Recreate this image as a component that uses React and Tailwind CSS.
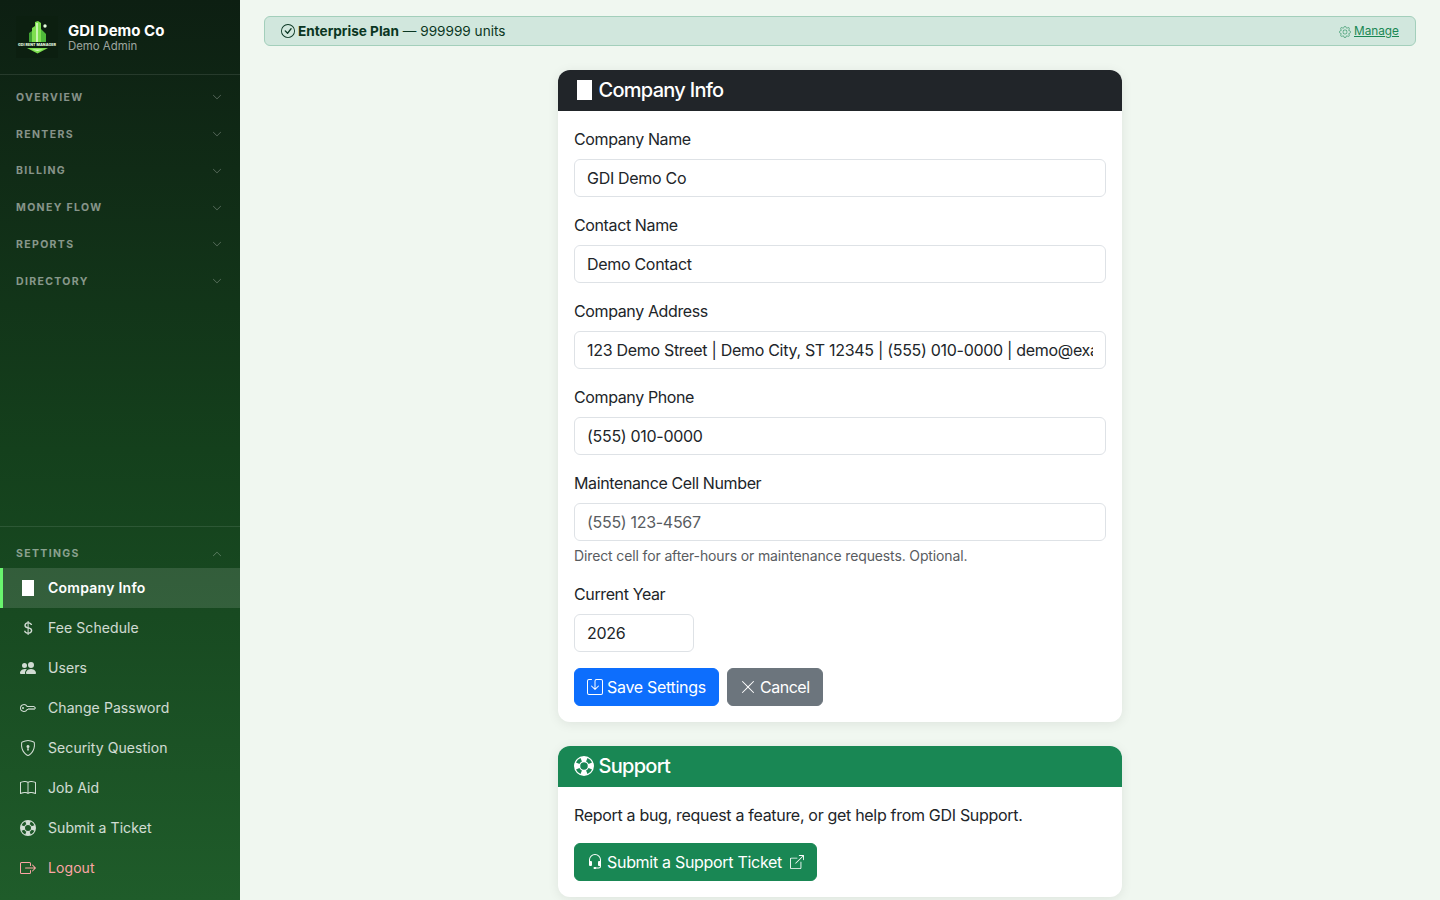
import React from "react";
import { BsCheckCircle, BsGear, BsPeopleFill, BsKey, BsShieldLock, BsBook, BsLifePreserver, BsBoxArrowRight, BsCurrencyDollar, BsChevronDown, BsChevronUp, BsSave, BsXLg, BsHeadset, BsBoxArrowUpRight } from "react-icons/bs";

const sections = ["OVERVIEW", "RENTERS", "BILLING", "MONEY FLOW", "REPORTS", "DIRECTORY"];
const items = [
  ["Fee Schedule", BsCurrencyDollar],
  ["Users", BsPeopleFill],
  ["Change Password", BsKey],
  ["Security Question", BsShieldLock],
  ["Job Aid", BsBook],
  ["Submit a Ticket", BsLifePreserver],
];

function Logo() {
  return (
    <svg width="42" height="42" viewBox="0 0 42 42" className="shrink-0">
      <rect width="42" height="42" fill="#0c1f10" />
      <path d="M13 26V17l3-2v11z" fill="#3f9f33" />
      <path d="M16 26V12l3-2V6l3-1 3 2v19z" fill="#7ddf4f" />
      <path d="M25 26V13l3 3 2 2v8z" fill="#4fb83a" />
      <rect x="20" y="7" width="2" height="19" fill="#c8f5b0" />
      <circle cx="29" cy="10" r="1.700" fill="#e8ffe0" />
      <text x="21" y="30" textAnchor="middle" fontSize="3.700" fontWeight="800" letterSpacing="0.05" fill="#e8ffe0" fontFamily="Inter, sans-serif">GDI RENT MANAGER</text>
      <path d="M11 32h21l-10.500 5.500z" fill="#7ddf4f" />
      <path d="M16 33.500h11l-5.500 1.500z" fill="#d6ffc4" />
    </svg>
  );
}

function Field({ label, value, placeholder, help, narrow }) {
  return (
    <div className="mb-4">
      <label className="block mb-2 text-base leading-6 tracking-[-0.38px] text-[#212529]">{label}</label>
      <input
        readOnly
        value={value || ""}
        placeholder={placeholder}
        className={`block h-[38px] ${narrow ? "w-[120px]" : "w-full"} rounded-md border border-[#dee2e6] bg-white px-3 text-base tracking-[-0.3px] text-[#212529] outline-none placeholder:text-[#595c5f]`}
      />
      {help && <div className="mt-1 text-sm leading-[21px] tracking-[-0.13px] text-[#595c5f]">{help}</div>}
    </div>
  );
}

export default function App() {
  return (
    <div className="flex h-screen overflow-hidden bg-[#f0f7f0] font-['Inter','Liberation_Sans',sans-serif] antialiased">
      <aside className="flex w-[240px] shrink-0 flex-col bg-gradient-to-b from-[#0d1f12] via-[#14401c] to-[#1f5c2a] text-white">
        <div className="flex h-[75px] items-center gap-[10px] border-b border-white/10 pl-4">
          <Logo />
          <div>
            <div className="text-[15px] font-bold leading-[18px] text-white">GDI Demo Co</div>
            <div className="text-[11.400px] leading-[13px] text-white/60">Demo Admin</div>
          </div>
        </div>
        <nav className="flex-1 pt-[4.300px]">
          {sections.map((s) => (
            <div key={s} className="flex h-[36.800px] items-center justify-between pl-4 pr-[18px]">
              <span className="text-[10.500px] font-bold tracking-[1.350px] text-white/50">{s}</span>
              <BsChevronDown className="mb-[1px] text-[10px] text-white/40" />
            </div>
          ))}
        </nav>
        <div className="border-t border-white/10 pb-3">
          <div className="flex h-[41px] items-center justify-between pl-4 pr-[18px] pt-[12px]">
            <span className="text-[10.500px] font-bold tracking-[1.350px] text-white/50">SETTINGS</span>
            <BsChevronUp className="text-[10px] text-white/40" />
          </div>
          <a className="flex h-10 items-center gap-[10px] border-l-[3px] border-[#69f56e] bg-white/[0.12] pl-[15px] text-sm font-semibold tracking-[0.25px] text-white">
            <span className="flex w-5 justify-center"><span className="block h-4 w-3 bg-white" /></span>
            Company Info
          </a>
          {items.map(([name, Icon]) => (
            <a key={name} className="flex h-10 items-center gap-[10px] pl-[18px] text-sm tracking-[0.08px] text-white/80">
              <span className="flex w-5 justify-center"><Icon className="text-base" /></span>
              {name}
            </a>
          ))}
          <a className="flex h-10 items-center gap-[10px] pl-[18px] text-sm tracking-[0.08px] text-[#fca5a5]">
            <span className="flex w-5 justify-center"><BsBoxArrowRight className="text-base" /></span>
            Logout
          </a>
        </div>
      </aside>

      <main className="min-w-0 flex-1 overflow-hidden px-6 pt-4">
        <div className="flex h-[30px] items-center justify-between rounded-md border border-[#a3cfbb] bg-[#d1e7dd] pl-4 pr-4 text-[13.600px] text-[#0a3622]">
          <div className="flex items-center gap-[3px]">
            <BsCheckCircle className="text-sm" />
            <span className="pt-[1px]"><strong className="font-bold">Enterprise Plan</strong> — 999999 units</span>
          </div>
          <a className="flex items-center gap-[3px] pt-[1px] text-[11.800px] text-[#198754] underline">
            <BsGear className="text-xs text-[#4fa37c]" /> Manage
          </a>
        </div>

        <div className="mx-auto mt-6 w-[564px]">
          <section className="overflow-hidden rounded-xl bg-white shadow-[0_2px_12px_rgba(0,0,0,0.08)]">
            <header className="flex h-[41px] items-center gap-[4.500px] bg-[#212529] px-4 pb-[1px] text-xl font-medium tracking-[-0.72px] text-white">
              <span className="flex w-5 justify-center"><span className="block h-5 w-[15px] bg-white" /></span>
              Company Info
            </header>
            <div className="p-4">
              <Field label="Company Name" value="GDI Demo Co" />
              <Field label="Contact Name" value="Demo Contact" />
              <Field label="Company Address" value="123 Demo Street | Demo City, ST 12345 | (555) 010-0000 | demo@example.com" />
              <Field label="Company Phone" value="(555) 010-0000" />
              <Field label="Maintenance Cell Number" placeholder="(555) 123-4567" help="Direct cell for after-hours or maintenance requests. Optional." />
              <Field label="Current Year" value="2026" narrow />
              <div className="flex gap-2">
                <button className="flex h-[38px] items-center gap-1 rounded-md border border-[#0d6efd] bg-[#0d6efd] px-3 text-base tracking-[-0.3px] text-white">
                  <BsSave className="text-base" /> Save Settings
                </button>
                <button className="flex h-[38px] items-center gap-1 rounded-md border border-[#6c757d] bg-[#6c757d] px-3 text-base tracking-[-0.45px] text-white">
                  <BsXLg className="text-base" /> Cancel
                </button>
              </div>
            </div>
          </section>

          <section className="mt-6 overflow-hidden rounded-xl bg-white shadow-[0_2px_12px_rgba(0,0,0,0.08)]">
            <header className="flex h-[41px] items-center gap-[4.500px] bg-[#198754] px-4 pb-[1px] text-xl font-medium tracking-[-0.72px] text-white">
              <BsLifePreserver className="text-xl" />
              Support
            </header>
            <div className="p-4">
              <p className="mb-4 text-base leading-6 tracking-[-0.31px] text-[#212529]">Report a bug, request a feature, or get help from GDI Support.</p>
              <button className="flex h-[38px] items-center gap-1 rounded-md border border-[#198754] bg-[#198754] px-3 text-base tracking-[-0.3px] text-white">
                <BsHeadset className="text-base" /> Submit a Support Ticket <BsBoxArrowUpRight className="ml-1 text-sm" />
              </button>
            </div>
          </section>
        </div>
      </main>
    </div>
  );
}
